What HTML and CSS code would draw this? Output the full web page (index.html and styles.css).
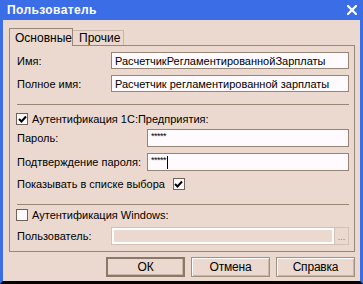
FILE: index.html
```html
<!DOCTYPE html>
<html lang="ru">
<head>
    <meta charset="UTF-8">
    <meta name="viewport" content="width=device-width, initial-scale=1.0">
    <link rel="stylesheet" href="styles.css">
</head>

<body>
    <div class="window">
        <div class="title-bar">
            <span class="title">Пользователь</span>
            <svg class="close-icon" width="10" height="10" viewBox="0 0 10 10">
                <path d="M1 1 L9 9 M9 1 L1 9" stroke="#fff" stroke-width="2.2" stroke-linecap="square"/>
            </svg>
        </div>

        <div class="window-body">
            <div class="tabs">
                <div class="tab active">Основные</div>
                <div class="tab">Прочие</div>
            </div>

            <div class="panel">
                <div class="row">
                    <span class="label label-short">Имя:</span>
                    <div class="field">РасчетчикРегламентированнойЗарплаты</div>
                </div>
                <div class="row row-gap">
                    <span class="label label-short">Полное имя:</span>
                    <div class="field">Расчетчик регламентированной зарплаты</div>
                </div>

                <div class="separator sep-1"></div>

                <div class="check-row check-auth">
                    <span class="checkbox checked">
                        <svg width="9" height="9" viewBox="0 0 9 9"><path d="M1 4 L3.5 6.5 L8 1.5" stroke="#000" stroke-width="2" fill="none"/></svg>
                    </span>
                    <span>Аутентификация 1С:Предприятия:</span>
                </div>

                <div class="row row-pass">
                    <span class="label label-long">Пароль:</span>
                    <div class="field field-tall"><span class="stars">*****</span></div>
                </div>
                <div class="row row-gap">
                    <span class="label label-long">Подтверждение пароля:</span>
                    <div class="field field-tall"><span class="stars">*****</span><span class="caret"></span></div>
                </div>

                <div class="check-row check-show">
                    <span>Показывать в списке выбора</span>
                    <span class="checkbox checked">
                        <svg width="9" height="9" viewBox="0 0 9 9"><path d="M1 4 L3.5 6.5 L8 1.5" stroke="#000" stroke-width="2" fill="none"/></svg>
                    </span>
                </div>

                <div class="separator sep-2"></div>

                <div class="check-row check-win">
                    <span class="checkbox"></span>
                    <span>Аутентификация Windows:</span>
                </div>

                <div class="row row-user">
                    <span class="label label-short">Пользователь:</span>
                    <div class="field field-tall field-disabled"></div>
                    <div class="dots-button">...</div>
                </div>
            </div>

            <div class="buttons">
                <div class="button default">ОК</div>
                <div class="button">Отмена</div>
                <div class="button">Справка</div>
            </div>
        </div>
    </div>
</body>
</html>
```

FILE: styles.css
```css
body {
    margin: 0px;
    padding: 0px;
    font-family: "Liberation Sans", Arial, sans-serif;
    font-size: 11px;
    color: #000;
}

.window {
    width: 363px;
    height: 284px;
    box-sizing: border-box;
    background-color: #ebd9cf;
    border-left: 3px solid #3b6de4;
    border-right: 3px solid #3b6de4;
    border-bottom: 3px solid #050505;
    display: flex;
    flex-direction: column;
}

.title-bar {
    height: 20px;
    margin: 0 -3px;
    padding: 0 6px 0 7px;
    background-color: #3b6ee6;
    display: flex;
    align-items: center;
    justify-content: space-between;
}

.title {
    color: white;
    font-weight: bold;
    font-size: 12px;
    letter-spacing: 0.4px;
}

.window-body {
    flex-grow: 1;
    display: flex;
    flex-direction: column;
    padding: 8px 5px 4px 6px;
}

/* tabs */
.tabs {
    display: flex;
    align-items: flex-end;
    height: 17px;
}

.tab {
    height: 15px;
    padding: 0 6px;
    border: 1px solid #c9b8a9;
    border-bottom: none;
    box-sizing: border-box;
    display: flex;
    align-items: center;
    font-size: 12px;
}

.tab.active {
    height: 18px;
    width: 64px;
    margin-bottom: -1px;
    border-color: #998878;
    background-color: #ebd9cf;
    position: relative;
    z-index: 1;
    padding-left: 5px;
}

.tab:not(.active) {
    width: 51px;
    border-left: none;
}

.panel {
    height: 207px;
    box-sizing: border-box;
    border: 1px solid #998878;
    padding: 6px 5px 6px 7px;
    display: flex;
    flex-direction: column;
}

/* rows */
.row {
    display: flex;
    align-items: center;
}

.row-gap {
    margin-top: 6px;
}

.row-pass {
    margin-top: 3px;
}

.row-user {
    margin-top: 5px;
}

.label {
    flex-shrink: 0;
    white-space: nowrap;
}

.label-short {
    width: 94px;
}

.label-long {
    width: 130px;
}

.field {
    flex-grow: 1;
    height: 17px;
    box-sizing: border-box;
    border: 1px solid #978676;
    background-color: #fefafd;
    padding: 0 3px;
    display: flex;
    align-items: center;
    white-space: nowrap;
    overflow: hidden;
    font-size: 11px;
}

.field-tall {
    height: 18px;
}

.stars {
    font-size: 9px;
    align-self: flex-start;
    margin-top: 1px;
    letter-spacing: -0.5px;
}

.caret {
    width: 1px;
    height: 13px;
    background-color: #000;
    margin-left: 1px;
}

.field-disabled {
    border-color: #d4c3b5;
    background-color: #ebd9cf;
    box-shadow: inset 0 0 0 2px #fff;
}

.dots-button {
    width: 14px;
    height: 18px;
    box-sizing: border-box;
    border: 1px solid #d4c3b5;
    border-left: none;
    color: #8a7a6c;
    font-size: 9px;
    display: flex;
    align-items: center;
    justify-content: center;
    padding-top: 2px;
}

.separator {
    height: 1px;
    background-color: #988777;
}

.sep-1 {
    margin-top: 12px;
}

.sep-2 {
    margin-top: 13px;
}

/* check boxes */
.check-row {
    height: 14px;
    display: flex;
    align-items: center;
    white-space: nowrap;
}

.check-auth {
    margin-top: 7px;
    margin-left: -1px;
    gap: 4px;
}

.check-show {
    margin-top: 6px;
    gap: 8px;
}

.check-win {
    margin-top: 3px;
    margin-left: -1px;
    gap: 4px;
}

.checkbox {
    width: 12px;
    height: 12px;
    box-sizing: border-box;
    border: 1px solid #6d6357;
    background-color: #fdf9fc;
    display: flex;
    align-items: center;
    justify-content: center;
}

/* buttons */
.buttons {
    margin-top: 5px;
    display: flex;
    justify-content: flex-end;
    gap: 6px;
}

.button {
    width: 79px;
    height: 20px;
    box-sizing: border-box;
    border: 1px solid #a09080;
    background-color: #ebd9cf;
    box-shadow: inset 1px 1px 0 #fff, inset -1px -1px 0 #c8b6a8;
    display: flex;
    align-items: center;
    justify-content: center;
    font-size: 12px;
    letter-spacing: -0.2px;
}

.button.default {
    border: 2px solid #8a7868;
    box-shadow: inset -1px -1px 0 #c8b6a8;
}
```
